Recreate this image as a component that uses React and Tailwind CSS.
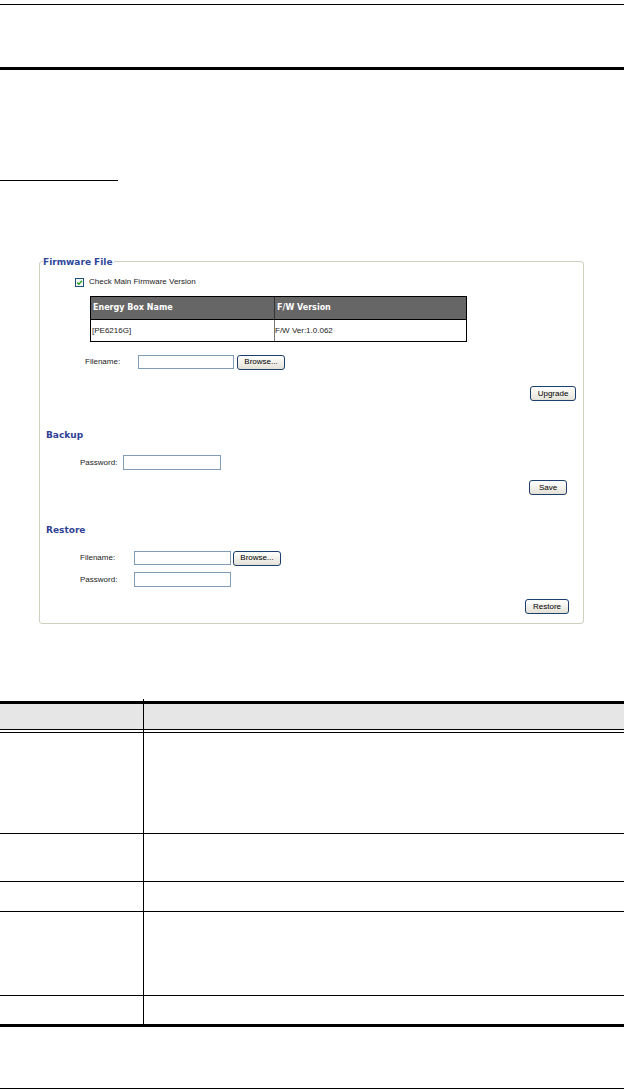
import React from 'react';

const Btn = ({ children, className = '' }) => (
  <div
    className={`flex items-center justify-center h-[15px] rounded-[3px] border border-[#1c3f6e] bg-gradient-to-b from-white to-[#e4e2d6] text-[8px] leading-none text-black font-['Liberation_Sans',sans-serif] ${className}`}
  >
    {children}
  </div>
);

const Field = ({ w = 'w-[97px]', h = 'h-[14px]' }) => (
  <div className={`${w} ${h} border border-[#7f9db9] bg-white`} />
);

const Heading = ({ children }) => (
  <div className="h-[12px] leading-[12px] ml-[6px] text-[9px] font-bold text-[#2e3f95] font-['DejaVu_Sans',sans-serif]">
    {children}
  </div>
);

const Label = ({ children, w }) => (
  <span className={`${w} text-[8px] text-[#222] font-['Liberation_Sans',sans-serif]`}>{children}</span>
);

function Row({ h }) {
  return (
    <>
      <div className={`flex ${h}`}>
        <div className="w-[144px] border-r border-black" />
      </div>
      <div className="h-px bg-black" />
    </>
  );
}

export default function App() {
  return (
    <div className="w-[624px] h-[1090px] bg-white flex flex-col font-['Liberation_Sans',sans-serif]">
      {/* page header rules */}
      <div className="mt-[4px] h-px bg-black" />
      <div className="mt-[62px] h-[3px] bg-black" />
      <div className="mt-[110px] w-[118px] h-px bg-black" />

      {/* settings panel */}
      <div className="relative mt-[80px] ml-[39px] w-[545px] h-[363px] border border-[#cfcfbe] rounded-[3px] flex flex-col">
        <span className="absolute -top-[6px] left-[3px] bg-white pr-px leading-[12px] text-[9px] font-bold text-[#2e479c] font-['DejaVu_Sans',sans-serif]">
          Firmware File
        </span>

        <div className="mt-[15px] ml-[35px] flex items-center gap-[5px] h-[10px]">
          <div className="w-[9px] h-[9px] border border-[#1c5180] bg-[#f4f4f0] flex items-center justify-center">
            <svg viewBox="0 0 10 10" className="w-[7px] h-[7px]">
              <path d="M1.5 5 L4 7.5 L8.5 2.5" fill="none" stroke="#21a121" strokeWidth="1.8" />
            </svg>
          </div>
          <span className="text-[8px] text-[#222]">Check Main Firmware Version</span>
        </div>

        <div className="mt-[9px] ml-[50px] w-[377px] border border-black">
          <div className="flex h-[22px] bg-[#666666] items-center text-white text-[8px] font-bold font-['DejaVu_Sans',sans-serif]">
            <div className="w-[184px] h-full flex items-center pl-[2px] border-r border-[#333]">Energy Box Name</div>
            <div className="pl-[2px]">F/W Version</div>
          </div>
          <div className="flex h-[22px] items-center border-t border-black text-[8px] text-[#222]">
            <div className="w-[184px] h-full flex items-center pl-px border-r border-[#777]">[PE6216G]</div>
            <div>F/W Ver:1.0.062</div>
          </div>
        </div>

        <div className="mt-[13px] ml-[45px] flex items-center h-[14px]">
          <Label w="w-[53px]">Filename:</Label>
          <Field w="w-[96px]" h="h-[14px]" />
          <Btn className="ml-[3px] w-[48px] h-[12px]">Browse...</Btn>
        </div>

        <div className="mt-[17px] mr-[7px] flex justify-end">
          <Btn className="w-[46px] h-[13px]">Upgrade</Btn>
        </div>

        <div className="mt-[28px]">
          <Heading>Backup</Heading>
        </div>
        <div className="mt-[14px] ml-[40px] flex items-center h-[15px]">
          <Label w="w-[43px]">Password:</Label>
          <Field w="w-[98px]" h="h-[15px]" />
        </div>

        <div className="mt-[10px] mr-[16px] flex justify-end">
          <Btn className="w-[38px]">Save</Btn>
        </div>

        <div className="mt-[29px]">
          <Heading>Restore</Heading>
        </div>
        <div className="mt-[15px] ml-[40px] flex items-center h-[14px]">
          <Label w="w-[54px]">Filename:</Label>
          <Field w="w-[97px]" h="h-[14px]" />
          <Btn className="ml-[2px] w-[48px] h-[12px]">Browse...</Btn>
        </div>
        <div className="mt-[7px] ml-[40px] flex items-center h-[15px]">
          <Label w="w-[54px]">Password:</Label>
          <Field w="w-[97px]" h="h-[15px]" />
        </div>

        <div className="mt-[12px] mr-[14px] flex justify-end">
          <Btn className="w-[44px]">Restore</Btn>
        </div>
      </div>

      {/* parameter table */}
      <div className="mt-[75px] flex h-[2px]">
        <div className="w-[144px] border-r border-black" />
      </div>
      <div className="h-[3px] bg-black" />
      <div className="flex h-[25px] bg-[#e6e6e6]">
        <div className="w-[144px] border-r border-black" />
      </div>
      <div className="h-px bg-black" />
      <div className="flex h-[2px]">
        <div className="w-[144px] border-r border-black" />
      </div>
      <div className="h-px bg-black" />
      <Row h="h-[100px]" />
      <Row h="h-[47px]" />
      <Row h="h-[29px]" />
      <Row h="h-[83px]" />
      <div className="flex h-[28px]">
        <div className="w-[144px] border-r border-black" />
      </div>
      <div className="h-[3px] bg-black" />

      <div className="mt-[61px] h-px bg-black" />
    </div>
  );
}
